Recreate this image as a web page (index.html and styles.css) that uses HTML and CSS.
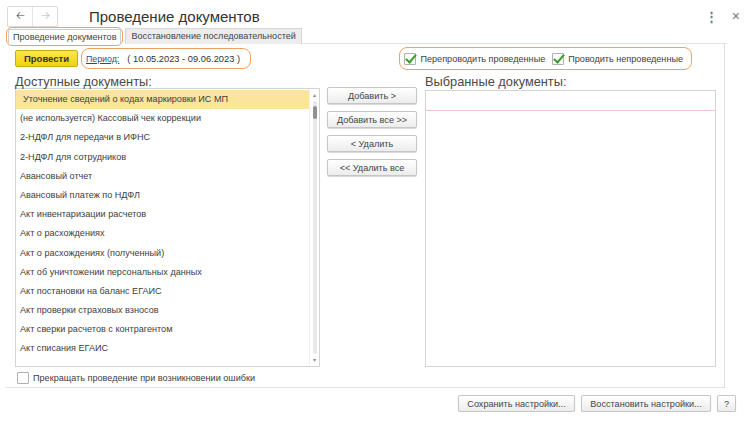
FILE: index.html
```html
<!DOCTYPE html>
<html lang="ru">
<head>
    <meta charset="UTF-8">
    <meta name="viewport" content="width=device-width, initial-scale=1.0">
    <title>Проведение документов</title>
    <link rel="stylesheet" href="styles.css">
</head>
<body>
    <!-- Window header -->
    <div class="header">
        <div class="nav">
            <span class="nav-btn">&#129120;</span>
            <span class="nav-btn disabled">&#129122;</span>
        </div>
        <div class="title">Проведение документов</div>
        <div class="header-icons">
            <span class="more">&#8942;</span>
            <span class="close">&#215;</span>
        </div>
    </div>

    <!-- Tabs -->
    <div class="tabs">
        <div class="mark mark-tab">
            <div class="tab active">Проведение документов</div>
        </div>
        <div class="tab">Восстановление последовательностей</div>
        <div class="tabs-line"></div>
    </div>

    <!-- Tab panel -->
    <div class="panel">
        <div class="toolbar">
            <button class="btn-yellow">Провести</button>
            <div class="mark mark-period">
                <a href="#" class="link">Период:</a>
                <span class="period">( 10.05.2023 - 09.06.2023 )</span>
            </div>
            <div class="mark mark-checks">
                <label class="check"><span class="box checked"></span>Перепроводить проведенные</label>
                <label class="check"><span class="box checked"></span>Проводить непроведенные</label>
            </div>
        </div>

        <div class="columns">
            <div class="col-left">
                <div class="caption">Доступные документы:</div>
                <div class="list">
                    <div class="rows">
                        <div class="row selected">Уточнение сведений о кодах маркировки ИС МП</div>
                        <div class="row">(не используется) Кассовый чек коррекции</div>
                        <div class="row">2-НДФЛ для передачи в ИФНС</div>
                        <div class="row">2-НДФЛ для сотрудников</div>
                        <div class="row">Авансовый отчет</div>
                        <div class="row">Авансовый платеж по НДФЛ</div>
                        <div class="row">Акт инвентаризации расчетов</div>
                        <div class="row">Акт о расхождениях</div>
                        <div class="row">Акт о расхождениях (полученный)</div>
                        <div class="row">Акт об уничтожении персональных данных</div>
                        <div class="row">Акт постановки на баланс ЕГАИС</div>
                        <div class="row">Акт проверки страховых взносов</div>
                        <div class="row">Акт сверки расчетов с контрагентом</div>
                        <div class="row">Акт списания ЕГАИС</div>
                    </div>
                    <div class="scrollbar">
                        <span class="arrow">&#9652;</span>
                        <div class="track"><div class="thumb"></div></div>
                        <span class="arrow">&#9662;</span>
                    </div>
                </div>
            </div>

            <div class="col-middle">
                <button class="btn">Добавить &gt;</button>
                <button class="btn">Добавить все &gt;&gt;</button>
                <button class="btn">&lt; Удалить</button>
                <button class="btn">&lt;&lt; Удалить все</button>
            </div>

            <div class="col-right">
                <div class="caption">Выбранные документы:</div>
                <div class="list list-selected">
                    <div class="list-head"></div>
                </div>
            </div>
        </div>

        <label class="check stop"><span class="box"></span>Прекращать проведение при возникновении ошибки</label>
    </div>

    <!-- Bottom buttons -->
    <div class="footer">
        <button class="btn btn-wide">Сохранить настройки...</button>
        <button class="btn btn-wide2">Восстановить настройки...</button>
        <button class="btn btn-help">?</button>
    </div>
</body>
</html>
```

FILE: styles.css
```css
body {
    margin: 0;
    font-family: "Liberation Sans", Arial, sans-serif;
    font-size: 9.1px;
    color: #404040;
    background: #fff;
}

/* Header */
.header {
    display: flex;
    align-items: center;
    height: 24px;
    padding: 4px 7px 0 7px;
}
.nav {
    display: flex;
    width: 49px;
    height: 19px;
    border: 1px solid #dcdcdc;
    border-radius: 2px;
    box-shadow: 0 1px 1px #e8e8e8;
}
.nav-btn {
    flex: 1;
    display: flex;
    align-items: center;
    justify-content: center;
    font-size: 11px;
    color: #444;
    font-family: "DejaVu Sans", sans-serif;
}
.nav-btn.disabled {
    color: #b8b8b8;
    border-left: 1px solid #e4e4e4;
}
.title {
    margin-left: 31px;
    font-size: 15px;
    color: #333;
}
.header-icons {
    margin-left: auto;
    display: flex;
    align-items: center;
    gap: 14px;
    color: #777;
    padding-right: 3px;
}
.more {
    font-size: 13px;
    font-weight: bold;
}
.close {
    font-size: 14px;
}

/* Tabs */
.tabs {
    display: flex;
    align-items: flex-end;
    height: 16px;
    padding-left: 6px;
}
.tab {
    height: 15px;
    line-height: 15px;
    padding: 0 5px;
    background: #ececec;
    border: 1px solid #d6d6d6;
    border-bottom: none;
    color: #444;
    white-space: nowrap;
    margin-left: 2px;
}
.tab.active {
    background: #fff;
    border-color: #cfcfcf;
    margin-left: 0;
    padding: 0 4px;
}
.tabs-line {
    width: 425px;
    border-bottom: 1px solid #e2e2e2;
}

/* Orange annotation outlines */
.mark {
    border: 1.5px solid #f0a264;
    border-radius: 8px;
}
.mark-tab {
    padding: 1px 1px 0 1px;
    border-radius: 6px;
    margin-bottom: -2px;
}
.mark-tab .tab {
    height: 14px;
    line-height: 14px;
    margin-bottom: 1px;
}

/* Panel */
.panel {
    width: 720px;
    margin-left: 5px;
    padding-left: 10px;
    height: 344px;
    border-right: 1px solid #e2e2e2;
    border-bottom: 1px solid #e2e2e2;
    box-sizing: border-box;
}
.toolbar {
    display: flex;
    align-items: center;
    height: 27px;
    padding-top: 1px;
}
.btn-yellow {
    width: 63px;
    height: 17px;
    padding: 0;
    font-family: inherit;
    font-size: 9.5px;
    font-weight: bold;
    color: #333;
    background: linear-gradient(#fbe64c, #f1d30c);
    border: 1px solid #c8ad10;
    border-radius: 2px;
}
.mark-period {
    display: flex;
    align-items: center;
    height: 19px;
    margin-left: 3px;
    padding: 0 10px 0 4px;
    font-size: 9.3px;
}
.link {
    color: #1d4fa0;
    font-size: 8.8px;
    margin-right: 8px;
}
.period {
    color: #333;
}
.mark-checks {
    display: flex;
    align-items: center;
    height: 21px;
    margin-left: auto;
    margin-right: 32px;
    padding: 0 8px 0 4px;
    gap: 7px;
}
.check {
    display: flex;
    align-items: center;
    gap: 4px;
    color: #404040;
}
.box {
    position: relative;
    width: 10px;
    height: 10px;
    border: 1px solid #b0b0b0;
    background: #fff;
    border-radius: 1px;
}
.box.checked::after {
    content: "";
    position: absolute;
    left: 3px;
    top: -2px;
    width: 4px;
    height: 9px;
    border-right: 2px solid #3d9a2c;
    border-bottom: 2px solid #3d9a2c;
    transform: rotate(40deg);
}

/* Columns */
.columns {
    display: flex;
    height: 294px;
}
.caption {
    font-size: 12.8px;
    color: #4a4a4a;
    height: 16px;
    line-height: 13px;
    padding-top: 3px;
    box-sizing: border-box;
}
.col-left {
    width: 305px;
}
.list {
    border: 1px solid #d4d4d4;
    background: #fff;
    box-sizing: border-box;
}
.col-left .list {
    display: flex;
    height: 279px;
    overflow: hidden;
}
.rows {
    flex: 1;
    padding-top: 1px;
}
.row {
    height: 19.2px;
    line-height: 19px;
    padding-left: 4px;
    white-space: nowrap;
    color: #404040;
}
.row.selected {
    background: #fbe49c;
    padding-left: 7px;
}
.scrollbar {
    width: 9px;
    display: flex;
    flex-direction: column;
    align-items: center;
    border-left: 1px solid #f0f0f0;
}
.arrow {
    font-size: 6px;
    color: #888;
    height: 12px;
    line-height: 12px;
}
.track {
    flex: 1;
    width: 4px;
    background: #e8e8e8;
    border-radius: 2px;
}
.thumb {
    height: 13px;
    margin-top: 5px;
    background: #909090;
    border-radius: 2px;
}

.col-middle {
    display: flex;
    flex-direction: column;
    gap: 7px;
    width: 90px;
    margin-left: 7px;
    padding-top: 15px;
}
.btn {
    height: 17px;
    padding: 0;
    font-family: inherit;
    font-size: 9.1px;
    color: #444;
    background: linear-gradient(#ffffff, #ececec);
    border: 1px solid #c6c6c6;
    border-radius: 2px;
    box-shadow: 0 1px 1px #d8d8d8;
}
.col-right {
    width: 291px;
    margin-left: 8px;
}
.list-selected {
    height: 277px;
    margin-top: 2px;
}
.list-head {
    height: 19px;
    border-bottom: 1px solid #f2c6c6;
}

.stop {
    height: 16px;
    margin-top: 4px;
    margin-left: 2px;
}

/* Footer */
.footer {
    display: flex;
    justify-content: flex-end;
    gap: 6px;
    padding: 7px 14px 0 0;
}
.btn-wide {
    width: 117px;
}
.btn-wide2 {
    width: 130px;
}
.btn-help {
    width: 19px;
}
```
